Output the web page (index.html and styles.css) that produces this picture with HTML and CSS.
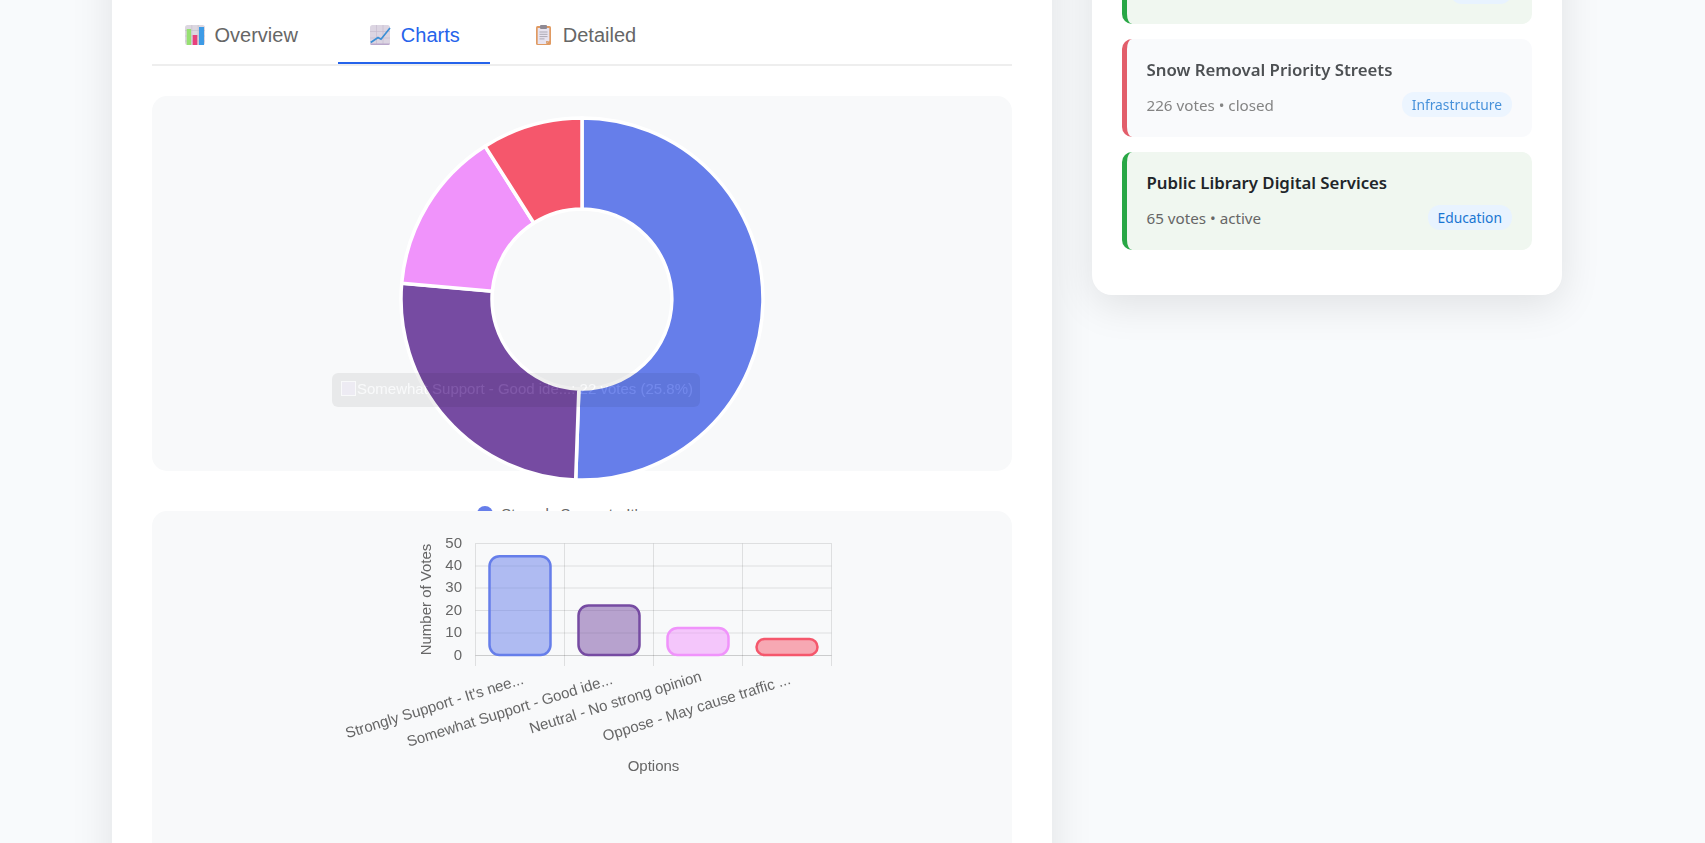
FILE: index.html
```html
<!DOCTYPE html>
<html lang="en">
<head>
<meta charset="utf-8">
<title>Poll results</title>
<link rel="stylesheet" href="styles.css">
</head>
<body>
<div class="page">
  <main class="main-card">
    <nav class="tabs">
      <div class="tab">
        <svg class="tab-icon" viewBox="0 0 24 24"><rect x="0" y="2" width="20" height="20" rx="2.5" fill="#dcd7e0"/><path d="M0 7.5h20M0 13h20M0 18h20M6.8 2v20M13.2 2v20" stroke="#c4bdca" stroke-width=".6"/><rect x="1.7" y="6" width="4.4" height="16" fill="#97e072"/><rect x="7.7" y="12" width="4.6" height="10" fill="#e8407c"/><rect x="14" y="4" width="5" height="18" fill="#3d9be6"/></svg>
        Overview
      </div>
      <div class="tab tab-active">
        <svg class="tab-icon" viewBox="0 0 24 24"><rect x="-1" y="2" width="20" height="20" rx="2.5" fill="#dcd5e2"/><path d="M-1 8.5h20M-1 15h20M5.5 2v20M12 2v20" stroke="#c2b8cc" stroke-width=".6"/><path d="M-1 20.6a1.5 1.5 0 0 0 1.5 1.4h17a1.5 1.5 0 0 0 1.5-1.4z" fill="#b9a8cb"/><path d="M-.3 19.5L7 14.5l3 1.7L19 5" fill="none" stroke="#3b8fd6" stroke-width="1.7"/></svg>
        Charts
      </div>
      <div class="tab">
        <svg class="tab-icon" viewBox="0 0 24 24"><rect x="3" y="3" width="15" height="19" rx="1.5" fill="#e09a62"/><path d="M4.7 5H16.3V18L13 21H4.7z" fill="#e8e4f0"/><path d="M13 21V18H16.3z" fill="#d9a57c"/><rect x="7" y="2" width="7" height="4" rx="1" fill="#8f8a94"/><path d="M6.5 9h8M6.5 11.3h8M6.5 13.6h8M6.5 15.9h5" stroke="#a5a1ad" stroke-width=".9"/></svg>
        Detailed
      </div>
    </nav>

    <section class="chart-box chart-box-donut">
      <svg class="donut" viewBox="0 0 366 366">
        <path class="slice" fill="#667eea" d="M183 2A181 181 0 1 1 176.68 363.89L179.86 272.95A90 90 0 1 0 183 93Z"/>
        <path class="slice" fill="#764ba2" d="M176.68 363.89A181 181 0 0 1 2.69 167.22L93.34 175.15A90 90 0 0 0 179.86 272.95Z"/>
        <path class="slice" fill="#f093fb" d="M2.69 167.22A181 181 0 0 1 86.02 30.18L134.78 107.01A90 90 0 0 0 93.34 175.15Z"/>
        <path class="slice" fill="#f5576c" d="M86.02 30.18A181 181 0 0 1 183 2L183 93A90 90 0 0 0 134.78 107.01Z"/>
      </svg>
      <div class="legend"><span class="legend-dot"></span>Strongly Support - It's nee...</div>
      <div class="tooltip"><span class="tooltip-swatch"></span>Somewhat Support - Good ide...: 22 votes (25.8%)</div>
    </section>

    <section class="chart-box chart-box-bar">
      <svg class="bars" viewBox="0 0 500 280">
        <g class="grid">
          <path d="M143.5 12.5H499.5M143.5 35H499.5M143.5 57H499.5M143.5 79.5H499.5M143.5 102H499.5"/>
          <path d="M143.5 12.5V135M232.5 12.5V135M321.5 12.5V135M410.5 12.5V135M499.5 12.5V135"/>
          <path class="grid-zero" d="M143.5 124.5H499.5"/>
        </g>
        <rect class="bar" x="157.5" y="25.2" width="61" height="98.8" rx="10" fill="#667eea"/>
        <rect class="bar" x="246.5" y="74.5" width="61" height="49.5" rx="10" fill="#764ba2"/>
        <rect class="bar" x="335.5" y="97" width="61" height="27" rx="10" fill="#f093fb"/>
        <rect class="bar" x="424.5" y="108" width="61" height="16" rx="8" fill="#f5576c"/>
        <g class="axis-text">
          <text x="130" y="17" text-anchor="end">50</text>
          <text x="130" y="39" text-anchor="end">40</text>
          <text x="130" y="61" text-anchor="end">30</text>
          <text x="130" y="84" text-anchor="end">20</text>
          <text x="130" y="106" text-anchor="end">10</text>
          <text x="130" y="129" text-anchor="end">0</text>
          <text transform="translate(99 68.5) rotate(-90)" text-anchor="middle">Number of Votes</text>
          <text transform="translate(192.5 152.5) rotate(-17.2)" text-anchor="end">Strongly Support - It's nee...</text>
          <text transform="translate(281.5 152.5) rotate(-17.2)" text-anchor="end">Somewhat Support - Good ide...</text>
          <text transform="translate(370.5 149.5) rotate(-17.2)" text-anchor="end">Neutral - No strong opinion</text>
          <text transform="translate(459.5 152.5) rotate(-17.2)" text-anchor="end">Oppose - May cause traffic ...</text>
          <text x="321.5" y="240" text-anchor="middle">Options</text>
        </g>
      </svg>
    </section>
  </main>

  <aside class="side-card">
    <div class="poll poll-active">
      <div class="poll-title">&nbsp;</div>
      <div class="poll-meta"><span>&nbsp;</span><span class="badge badge-first">&nbsp;</span></div>
    </div>
    <div class="poll poll-closed">
      <div class="poll-title">Snow Removal Priority Streets</div>
      <div class="poll-meta"><span>226 votes • closed</span><span class="badge">Infrastructure</span></div>
    </div>
    <div class="poll poll-active">
      <div class="poll-title">Public Library Digital Services</div>
      <div class="poll-meta"><span>65 votes • active</span><span class="badge">Education</span></div>
    </div>
  </aside>
</div>
</body>
</html>
```
FILE: styles.css
```css
* { box-sizing: border-box; }
html, body { margin: 0; height: 100%; overflow: hidden; }
body { background: #f8fafc; font-family: "Liberation Sans", Arial, sans-serif; }

.page {
  display: flex;
  align-items: flex-start;
  gap: 40px;
  margin-top: -100px;
  padding-left: 112px;
}

.main-card {
  width: 940px;
  height: 1200px;
  flex: none;
  padding: 100px 40px 0;
  background: #fff;
  box-shadow: 0 10px 40px rgba(0, 0, 0, .1);
}

.tabs {
  display: flex;
  gap: 10px;
  margin-bottom: 30px;
  border-bottom: 2px solid #eeeeee;
}
.tab {
  display: flex;
  align-items: center;
  gap: 5.5px;
  height: 64px;
  padding: 8px 30.5px 0 33px;
  border-bottom: 2px solid transparent;
  color: #666;
  font-size: 20px;
}
.tab-active { color: #2563eb; border-bottom-color: #2563eb; }
.tab-icon { width: 24px; height: 24px; flex: none; overflow: visible; }

.chart-box {
  position: relative;
  display: flex;
  flex-direction: column;
  align-items: center;
  padding: 20px;
  border-radius: 15px;
  background: #f8f9fa;
}
.chart-box-donut { height: 375px; margin-bottom: 40px; }
.chart-box-bar { height: 600px; }

.donut { width: 366px; height: 366px; flex: none; overflow: visible; }
.slice { stroke: #fff; stroke-width: 3.5; }

.legend {
  display: flex;
  align-items: center;
  gap: 8px;
  flex: none;
  margin-top: 23px;
  color: #666;
  font-size: 15px;
  line-height: 17px;
}
.legend-dot { width: 16px; height: 16px; border-radius: 50%; background: #667eea; }

.tooltip {
  position: absolute;
  left: 180px;
  top: 277px;
  width: 368px;
  height: 34px;
  display: flex;
  align-items: center;
  padding: 0 0 4px 9px;
  border-radius: 6px;
  background: rgba(0, 0, 0, .8);
  color: #fff;
  font-size: 15px;
  white-space: nowrap;
  opacity: .075;
  filter: blur(.4px);
}
.tooltip-swatch {
  width: 15px;
  height: 15px;
  margin-right: 1px;
  border: 1px solid #fff;
  background: #764ba2;
  flex: none;
}

.bars { width: 500px; height: 280px; flex: none; }
.grid path { fill: none; stroke: rgba(0, 0, 0, .1); stroke-width: 1; }
.grid .grid-zero { stroke: rgba(0, 0, 0, .18); }
.bar { fill-opacity: .5; stroke-width: 2.5; stroke: currentColor; }
.axis-text {
  fill: #666;
  font-size: 15px;
  font-family: "Liberation Sans", Arial, sans-serif;
  filter: blur(.3px);
}
.bars .bar:nth-of-type(1) { color: #667eea; }
.bars .bar:nth-of-type(2) { color: #764ba2; }
.bars .bar:nth-of-type(3) { color: #f093fb; }
.bars .bar:nth-of-type(4) { color: #f5576c; }

.side-card {
  width: 470px;
  flex: none;
  padding: 0 30px 45px;
  border-radius: 20px;
  background: #fff;
  box-shadow: 0 10px 40px rgba(0, 0, 0, .1);
  font-family: "Noto Sans", sans-serif;
}

.poll {
  height: 98px;
  margin-top: 15px;
  padding: 17px 20px 15px 19.5px;
  border-left: 5px solid;
  border-radius: 10px;
}
.poll:first-child { margin-top: 0; height: 124px; padding-top: 43px; }
.poll-active { background: #f0f7f0; border-left-color: #28a745; }
.poll-closed { background: #f8f9fc; border-left-color: #dc3545; opacity: .8; }

.poll-title {
  margin-bottom: 8px;
  color: #212529;
  font-size: 16.8px;
  font-weight: 600;
  line-height: 28px;
}
.poll-meta {
  display: flex;
  align-items: center;
  justify-content: space-between;
  color: #666;
  font-size: 15.2px;
}
.badge {
  padding: 3px 10px;
  border-radius: 12px;
  background: #e8f3ff;
  color: #1976d2;
  font-size: 13.8px;
  line-height: 19px;
}
.badge-first { width: 62px; }
```
